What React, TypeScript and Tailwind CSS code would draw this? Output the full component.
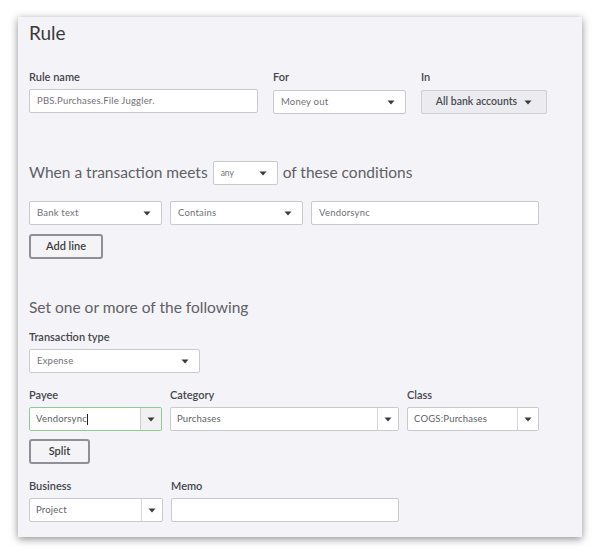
import React from "react";

const font = { fontFamily: "Lato, 'Open Sans', sans-serif" };

function Tri() {
  return (
    <svg width="8" height="5" viewBox="0 0 8 5" className="shrink-0">
      <path d="M0.5 0.5 L7.5 0.5 L4 4.5 Z" fill="#393a3d" />
    </svg>
  );
}

function Label({ children, w }: { children: React.ReactNode; w?: string }) {
  return (
    <div className={`h-4 leading-4 text-[11px] font-semibold text-[#45464b] ${w ?? ""}`}>{children}</div>
  );
}

function Select({ text, w, small }: { text: string; w: string; small?: boolean }) {
  return (
    <div
      className={`${w} h-6 bg-white border border-[#c9cace] rounded-[2px] flex items-center justify-between pl-[7px] pr-[10px] shrink-0`}
    >
      <span className={`${small ? "text-[8.5px]" : "text-[9.5px]"} text-[#707177] tracking-[0.2px]`}>{text}</span>
      <Tri />
    </div>
  );
}

function Input({ text, w }: { text: string; w: string }) {
  return (
    <div
      className={`${w} h-6 bg-white border border-[#c9cace] rounded-[2px] flex items-center pl-[7px] shrink-0`}
    >
      <span className="text-[9.5px] text-[#707177] tracking-[0.2px]">{text}</span>
    </div>
  );
}

function Combo({
  text,
  w,
  focus,
  caret,
}: {
  text: string;
  w: string;
  focus?: boolean;
  caret?: boolean;
}) {
  return (
    <div
      className={`${w} h-6 bg-white border ${
        focus ? "border-[#8fcb8f]" : "border-[#c9cace]"
      } rounded-[2px] flex items-stretch shrink-0`}
    >
      <div className="flex-1 flex items-center pl-[6px]">
        <span className="text-[9.5px] text-[#606166] tracking-[0.2px]">{text}</span>
        {caret && <span className="w-px h-[11px] bg-[#222] ml-[0.5px]" />}
      </div>
      <div
        className={`w-[21px] border-l ${
          focus ? "border-[#d0d0d4] bg-[#f1f1f3]" : "border-[#d6d6da] bg-white"
        } flex items-center justify-center`}
      >
        <Tri />
      </div>
    </div>
  );
}

function Button({ text, w }: { text: string; w: string }) {
  return (
    <div
      className={`${w} h-[25px] bg-[#f4f4f6] border-2 border-[#8d9096] rounded-[3px] flex items-center justify-center text-[11px] font-semibold text-[#393a3d]`}
    >
      {text}
    </div>
  );
}

export default function App() {
  return (
    <div className="w-[600px] h-[556px] bg-white pl-[18px] pt-[17px]" style={font}>
      <div className="w-[564px] h-[520px] bg-[#f4f4f8] shadow-[0_2px_8px_rgba(0,0,0,0.45)] pl-[11px]">
        <div className="pt-[4px] h-[24px] leading-[24px] text-[19px] text-[#393a3d]">Rule</div>

        {/* Rule name row */}
        <div className="mt-[28px] flex gap-[15px]">
          <div className="flex flex-col gap-[4px]">
            <Label>Rule name</Label>
            <Input text="PBS.Purchases.File Juggler." w="w-[229px]" />
          </div>
          <div className="flex flex-col gap-[5px]">
            <Label>For</Label>
            <Select text="Money out" w="w-[133px]" />
          </div>
          <div className="flex flex-col gap-[5px]">
            <Label>In</Label>
            <div className="w-[126px] h-6 bg-[#ececf0] border border-[#cfd0d4] rounded-[2px] flex items-center justify-center gap-[7px]">
              <span className="text-[10.5px] font-semibold text-[#4a4b50]">All bank accounts</span>
              <Tri />
            </div>
          </div>
        </div>

        {/* Conditions heading */}
        <div className="mt-[47px] flex items-center h-6">
          <span className="text-[15.5px] text-[#5f6066]">When a transaction meets</span>
          <div className="ml-[5px] w-[65px] h-6 bg-white border border-[#c9cace] rounded-[2px] flex items-center justify-between pl-[7px] pr-[10px]">
            <span className="text-[8.5px] text-[#707177]">any</span>
            <Tri />
          </div>
          <span className="ml-[5px] text-[15.5px] text-[#5f6066]">of these conditions</span>
        </div>

        <div className="mt-[16px] flex gap-[8px]">
          <Select text="Bank text" w="w-[133px]" />
          <Select text="Contains" w="w-[133px]" />
          <Input text="Vendorsync" w="w-[228px]" />
        </div>

        <div className="mt-[9px]">
          <Button text="Add line" w="w-[74px]" />
        </div>

        {/* Set section */}
        <div className="mt-[37px] h-[22px] leading-[22px] text-[15.5px] text-[#5f6066]">
          Set one or more of the following
        </div>

        <div className="mt-[11px]">
          <Label>Transaction type</Label>
        </div>
        <div className="mt-[4px]">
          <Select text="Expense" w="w-[171px]" />
        </div>

        <div className="mt-[14px] flex gap-[8px]">
          <div className="flex flex-col gap-[4px]">
            <Label>Payee</Label>
            <Combo text="Vendorsync" w="w-[133px]" focus caret />
          </div>
          <div className="flex flex-col gap-[4px]">
            <Label>Category</Label>
            <Combo text="Purchases" w="w-[229px]" />
          </div>
          <div className="flex flex-col gap-[4px]">
            <Label>Class</Label>
            <Combo text="COGS:Purchases" w="w-[132px]" />
          </div>
        </div>

        <div className="mt-[8px]">
          <Button text="Split" w="w-[61px]" />
        </div>

        <div className="mt-[14px] flex gap-[8px]">
          <div className="flex flex-col gap-[4px]">
            <Label>Business</Label>
            <Combo text="Project" w="w-[134px]" />
          </div>
          <div className="flex flex-col gap-[4px]">
            <Label>Memo</Label>
            <Input text="" w="w-[228px]" />
          </div>
        </div>
      </div>
    </div>
  );
}
